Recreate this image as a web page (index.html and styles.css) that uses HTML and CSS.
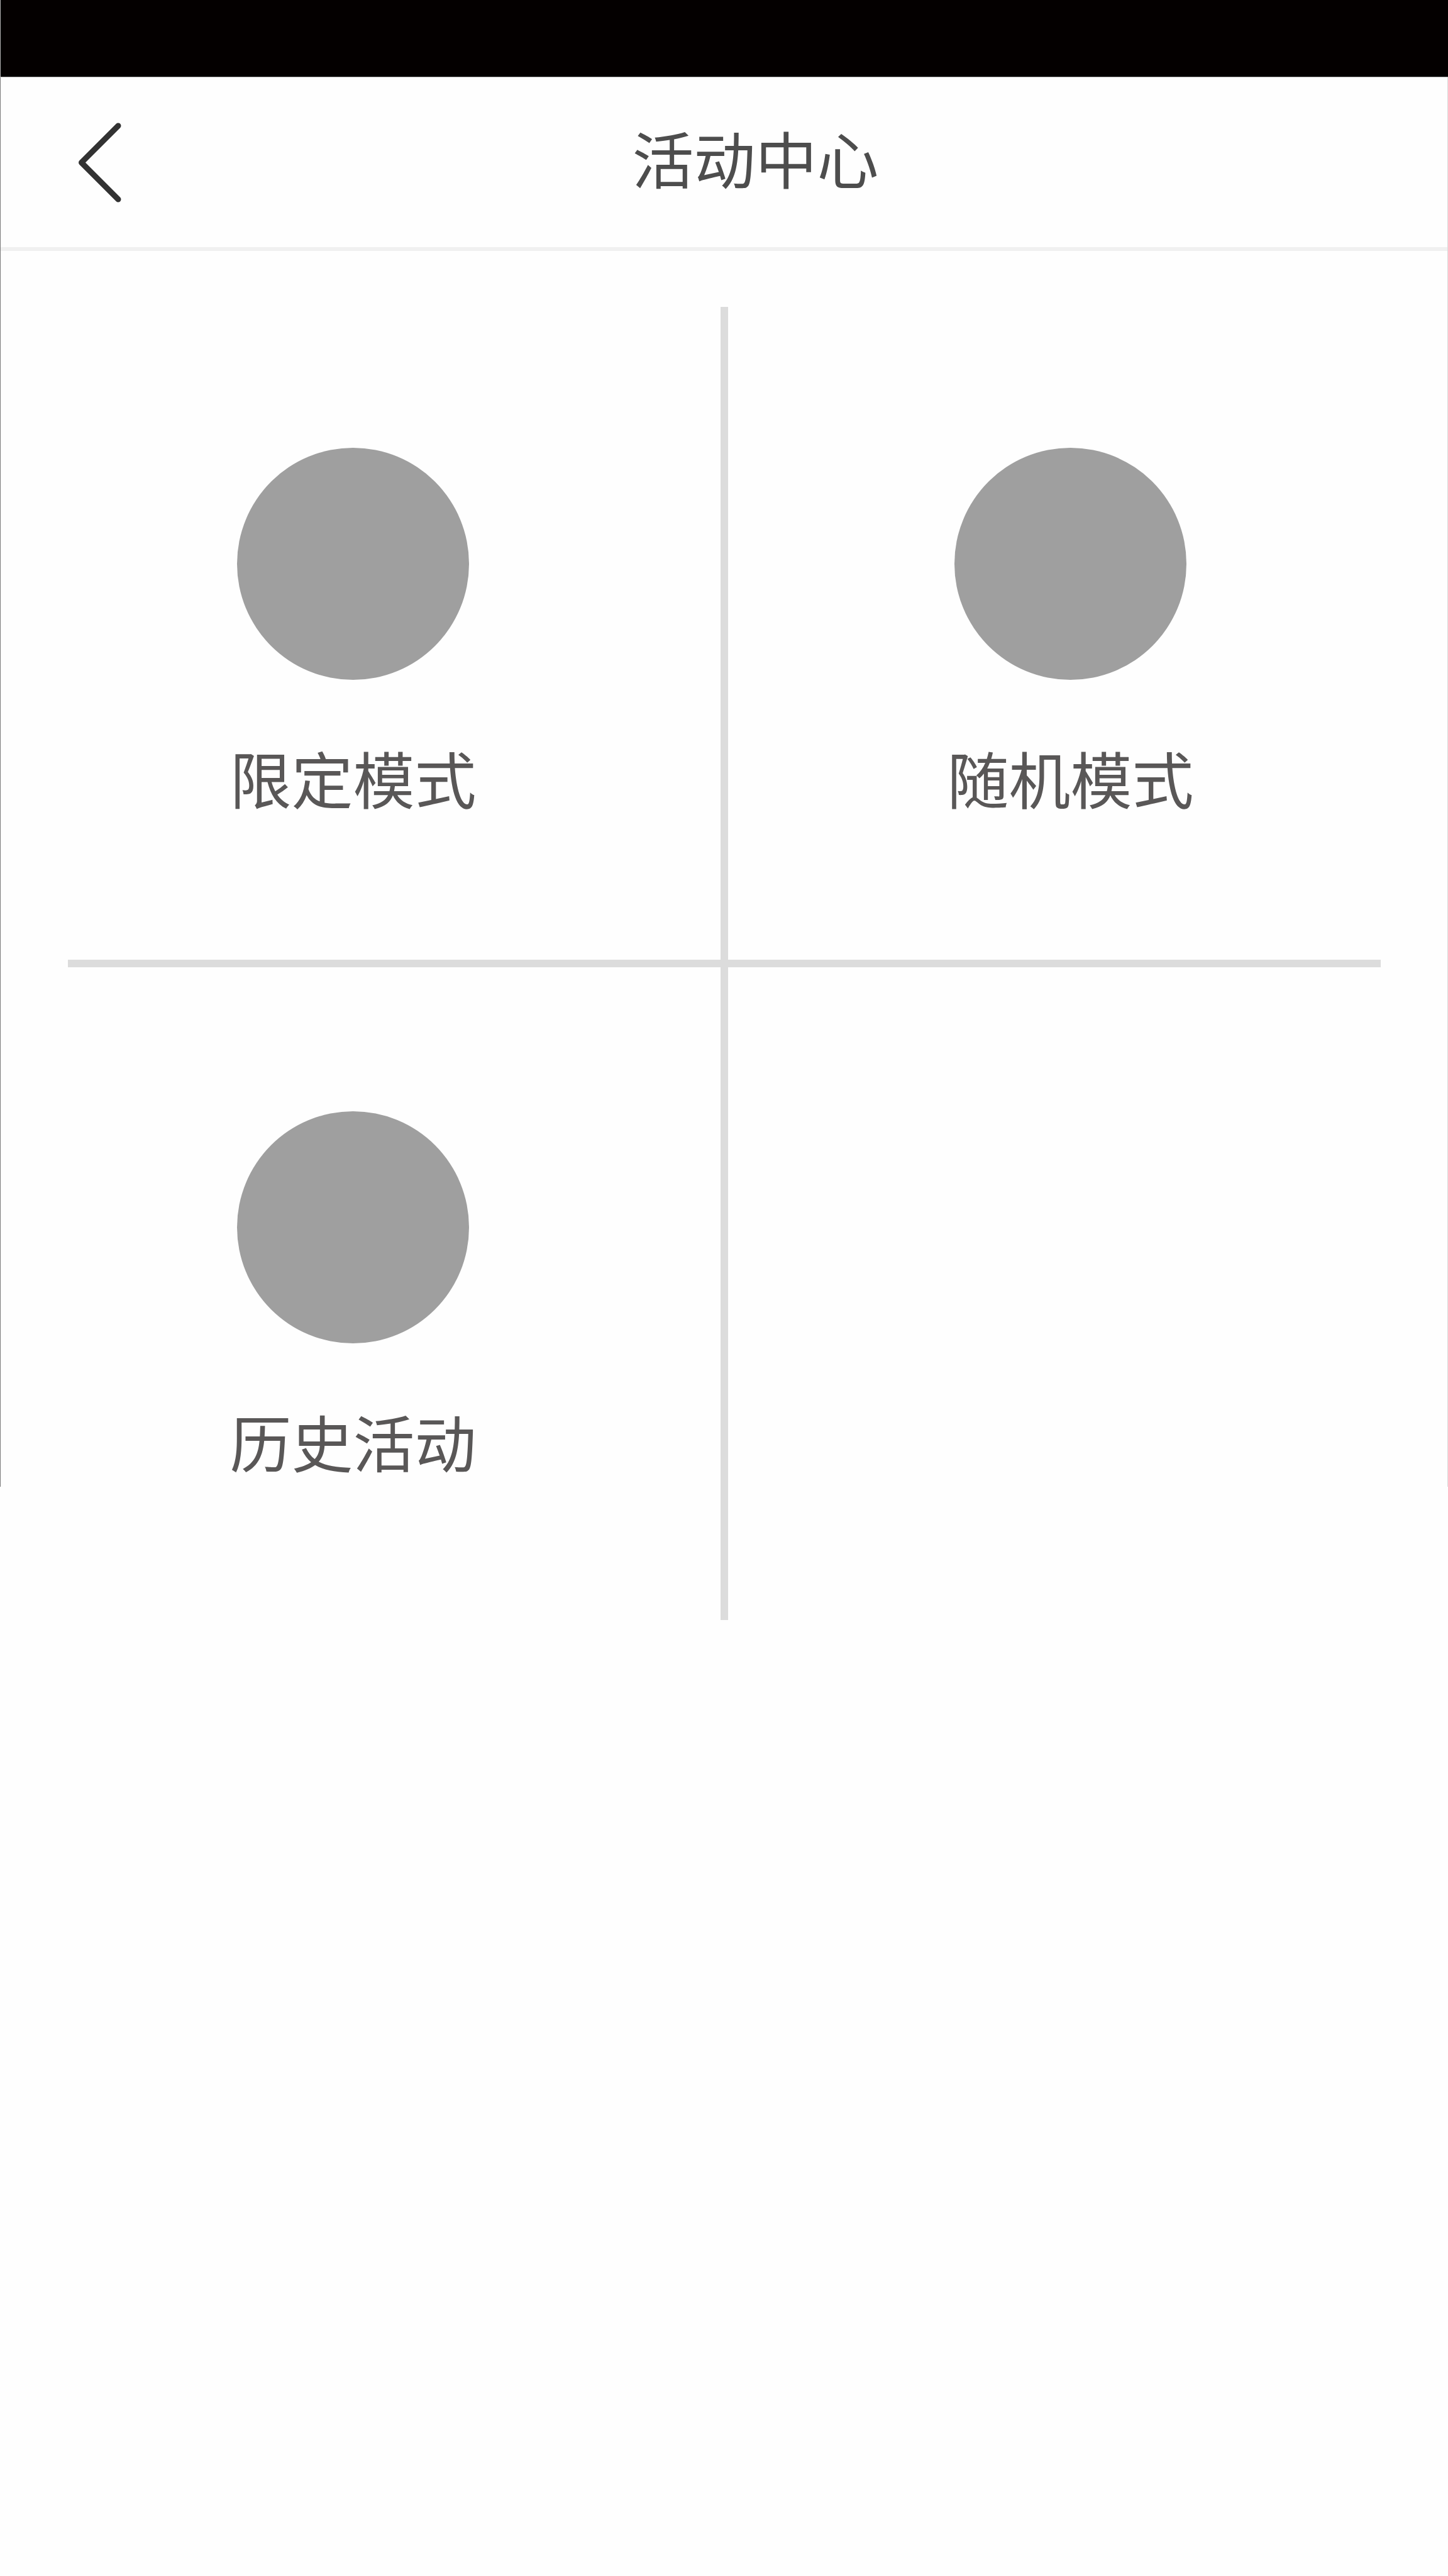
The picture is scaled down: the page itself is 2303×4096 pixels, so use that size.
FILE: index.html
```html
<!DOCTYPE html>
<html lang="zh-CN">
<head>
  <meta charset="utf-8">
  <meta name="viewport" content="width=device-width, initial-scale=1">
  <title>活动中心</title>
  <link rel="stylesheet" href="styles.css">
</head>
<body>
  <div class="screen">
    <div class="status-bar"></div>
    <header class="header">
      <button class="back" type="button" aria-label="返回">
        <svg class="back-icon" viewBox="0 0 68 127" aria-hidden="true">
          <path d="M63 5 4.500 63.500 63 122" fill="none" stroke="#323232" stroke-width="9" stroke-linecap="round" stroke-linejoin="round"/>
        </svg>
      </button>
      <h1 class="title">活动中心</h1>
    </header>
    <main class="modes">
      <div class="cell cell-start cell-first">
        <a class="mode" href="#limited"><span class="mode-icon"></span><span class="mode-label">限定模式</span></a>
      </div>
      <div class="cell cell-end cell-first">
        <a class="mode" href="#random"><span class="mode-icon"></span><span class="mode-label">随机模式</span></a>
      </div>
      <div class="cell cell-start">
        <a class="mode" href="#history"><span class="mode-icon"></span><span class="mode-label">历史活动</span></a>
      </div>
      <div class="cell cell-end"></div>
    </main>
  </div>
</body>
</html>
```
FILE: styles.css
```css
* {
  box-sizing: border-box;
}

body {
  margin: 0;
  background: #fefefe;
  color: #595757;
  font-family: "Noto Sans CJK SC", sans-serif;
  font-size: 98px;
  line-height: 98px;
}

.screen {
  position: relative;
  min-height: 100vh;
}

/* Thin outline down both sides of the first view */
.screen::before {
  content: "";
  position: absolute;
  top: 123px;
  left: 0;
  right: 0;
  height: 2241px;
  border-left: 1px solid #7b7b7b;
  border-right: 1px solid #d9d9d9;
  pointer-events: none;
}

.status-bar {
  height: 123px;
  background: #040000;
  border-left: 1px solid #b5b5b5;
  border-bottom: 1px solid #b5b5b5;
}

.header {
  display: flex;
  align-items: center;
  height: 276px;
  margin: 0 1px;
  padding: 0 92px 0 124px;
  border-bottom: 6px solid #f0f0f0;
}

.back {
  flex: none;
  display: block;
  width: 68px;
  padding: 0;
  border: 0;
  background: none;
  cursor: pointer;
}

.back-icon {
  display: block;
  width: 68px;
  height: 127px;
}

.title {
  flex: 1;
  margin: 0;
  padding-bottom: 18px;
  color: #4d4d4d;
  font-size: 98px;
  font-weight: 400;
  text-align: center;
}

/* The gaps let the background through as the dividing cross */
.modes {
  display: grid;
  grid-template-columns: 1fr 1fr;
  gap: 12px;
  margin: 89px 107px 0 108px;
  background: #dcdcdc;
}

.cell {
  aspect-ratio: 1;
  padding-top: 229px;
  background: #fefefe;
}

.cell-first {
  padding-top: 224px;
}

.cell-start {
  padding-right: 131px;
}

.cell-end {
  padding-left: 51px;
}

.mode {
  display: flex;
  flex-direction: column;
  align-items: center;
  gap: 105px;
  color: inherit;
  text-decoration: none;
}

.mode-icon {
  width: 369px;
  height: 369px;
  border-radius: 50%;
  background: #9f9f9f;
}
```
